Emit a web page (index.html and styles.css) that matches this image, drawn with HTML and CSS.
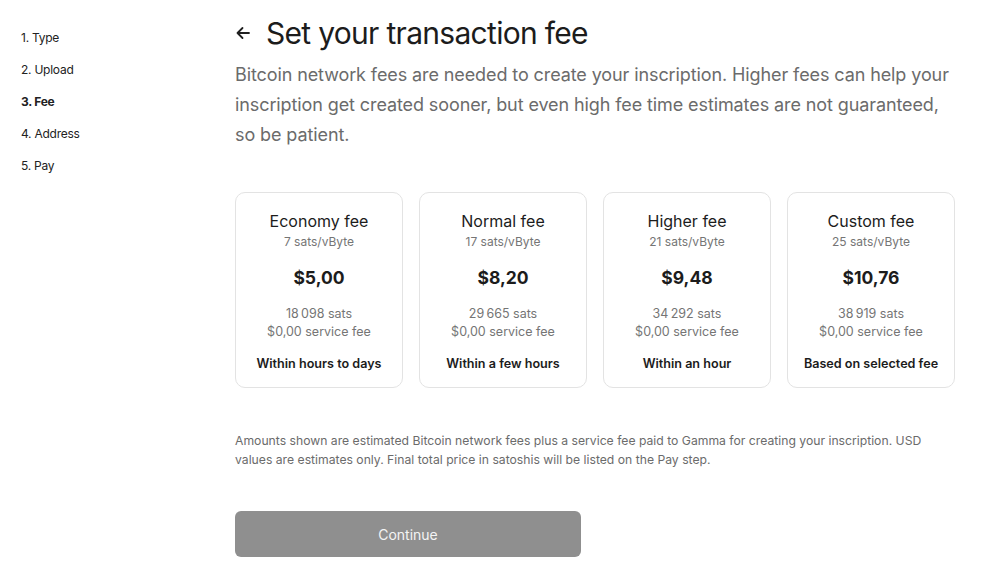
FILE: index.html
```html
<!DOCTYPE html>
<html>
<head>
<meta charset="utf-8">
<link rel="stylesheet" href="styles.css">
</head>
<body>
<div class="page">
  <nav class="steps">
    <div class="step">1. Type</div>
    <div class="step">2. Upload</div>
    <div class="step active">3. Fee</div>
    <div class="step">4. Address</div>
    <div class="step">5. Pay</div>
  </nav>
  <main class="main">
    <div class="title-row">
      <svg class="back" width="16" height="16" viewBox="0 0 16 16"><path d="M14 8H2.5M7.5 3L2.5 8l5 5" fill="none" stroke="#1f1f1f" stroke-width="1.8" stroke-linecap="round" stroke-linejoin="round"/></svg>
      <h1>Set your transaction fee</h1>
    </div>
    <p class="lead">Bitcoin network fees are needed to create your inscription. Higher fees can help your inscription get created sooner, but even high fee time estimates are not guaranteed, so be patient.</p>
    <div class="cards">
      <div class="card">
        <div class="name">Economy fee</div>
        <div class="rate">7 sats/vByte</div>
        <div class="price">$5,00</div>
        <div class="sats">18&#8239;098 sats</div>
        <div class="svc">$0,00 service fee</div>
        <div class="eta">Within hours to days</div>
      </div>
      <div class="card">
        <div class="name">Normal fee</div>
        <div class="rate">17 sats/vByte</div>
        <div class="price">$8,20</div>
        <div class="sats">29&#8239;665 sats</div>
        <div class="svc">$0,00 service fee</div>
        <div class="eta">Within a few hours</div>
      </div>
      <div class="card">
        <div class="name">Higher fee</div>
        <div class="rate">21 sats/vByte</div>
        <div class="price">$9,48</div>
        <div class="sats">34&#8239;292 sats</div>
        <div class="svc">$0,00 service fee</div>
        <div class="eta">Within an hour</div>
      </div>
      <div class="card">
        <div class="name">Custom fee</div>
        <div class="rate">25 sats/vByte</div>
        <div class="price">$10,76</div>
        <div class="sats">38&#8239;919 sats</div>
        <div class="svc">$0,00 service fee</div>
        <div class="eta">Based on selected fee</div>
      </div>
    </div>
    <p class="note">Amounts shown are estimated Bitcoin network fees plus a service fee paid to Gamma for creating your inscription. USD values are estimates only. Final total price in satoshis will be listed on the Pay step.</p>
    <button class="continue">Continue</button>
  </main>
</div>
</body>
</html>
```

FILE: styles.css
```css
* { box-sizing: border-box; }
html, body { margin: 0; padding: 0; background: #fff; }
body { font-family: Inter, "Noto Sans", sans-serif; color: #1f1f1f; }
.page { display: flex; }
.steps {
  width: 235px;
  padding: 29px 0 0 21px;
  display: flex;
  flex-direction: column;
  gap: 14px;
}
.step { font-size: 12px; line-height: 18px; color: #222; letter-spacing: -0.25px; }
.step.active { font-weight: 700; }
.main { width: 720px; padding-top: 13px; }
.title-row { display: flex; align-items: center; gap: 15px; height: 40px; }
.back { margin-left: 0; }
h1 { margin: 0; font-size: 30px; font-weight: 400; letter-spacing: -0.7px; color: #1c1c1c; }
.lead { margin: 7px 0 0; font-size: 18px; line-height: 30px; color: #6b6b6b; letter-spacing: -0.1px; }
.cards { display: flex; gap: 16px; margin-top: 42px; }
.card {
  flex: 1;
  height: 196px;
  border: 1px solid #e3e3e3;
  border-radius: 10px;
  display: flex;
  flex-direction: column;
  align-items: center;
  padding-top: 18px;
}
.name { font-size: 16px; line-height: 21px; color: #1c1c1c; }
.rate { font-size: 12px; line-height: 16px; color: #757575; margin-top: 2px; }
.price { font-size: 17.5px; font-weight: 700; line-height: 24px; margin-top: 16px; color: #1c1c1c; }
.sats { font-size: 12.5px; line-height: 18px; color: #757575; margin-top: 15px; }
.svc { font-size: 12.5px; line-height: 18px; color: #757575; }
.eta { font-size: 12.6px; font-weight: 600; line-height: 18px; margin-top: 14px; color: #1c1c1c; }
.note { margin: 43px 0 0; font-size: 12.2px; line-height: 19px; color: #6b6b6b; letter-spacing: 0; }
.continue {
  display: block;
  margin-top: 42px;
  width: 346px;
  height: 46px;
  border: none;
  border-radius: 6px;
  background: #8f8f8f;
  color: #f4f4f4;
  font-family: Inter, sans-serif;
  font-size: 14px;
}
```
